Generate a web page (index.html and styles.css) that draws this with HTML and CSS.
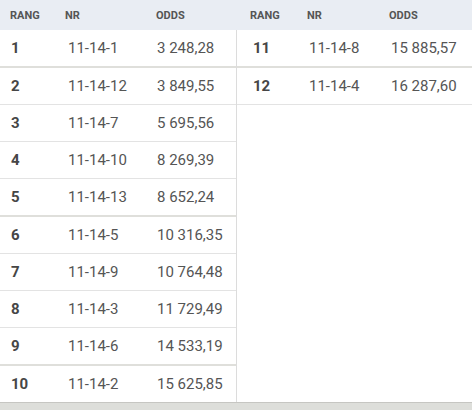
FILE: index.html
```html
<!DOCTYPE html>
<html lang="sv">
<head>
<meta charset="utf-8">
<title>Odds</title>
<link rel="stylesheet" href="styles.css">
</head>
<body>
<div class="board">
  <div class="panel panel-left">
    <div class="row head"><span>Rang</span><span>Nr</span><span>Odds</span></div>
    <div class="body">
      <div class="row thick"><b>1</b><span>11-14-1</span><span>3 248,28</span></div>
      <div class="row"><b>2</b><span>11-14-12</span><span>3 849,55</span></div>
      <div class="row"><b>3</b><span>11-14-7</span><span>5 695,56</span></div>
      <div class="row"><b>4</b><span>11-14-10</span><span>8 269,39</span></div>
      <div class="row thick"><b>5</b><span>11-14-13</span><span>8 652,24</span></div>
      <div class="row"><b>6</b><span>11-14-5</span><span>10 316,35</span></div>
      <div class="row"><b>7</b><span>11-14-9</span><span>10 764,48</span></div>
      <div class="row"><b>8</b><span>11-14-3</span><span>11 729,49</span></div>
      <div class="row thick"><b>9</b><span>11-14-6</span><span>14 533,19</span></div>
      <div class="row last"><b>10</b><span>11-14-2</span><span>15 625,85</span></div>
    </div>
  </div>
  <div class="panel panel-right">
    <div class="row head"><span>Rang</span><span>Nr</span><span>Odds</span></div>
    <div class="body">
      <div class="row thick"><b>11</b><span>11-14-8</span><span>15 885,57</span></div>
      <div class="row"><b>12</b><span>11-14-4</span><span>16 287,60</span></div>
    </div>
  </div>
</div>
<div class="footer"></div>
</body>
</html>
```
FILE: styles.css
```css
html, body {
  margin: 0;
  padding: 0;
  background: #ffffff;
}
body {
  font-family: Roboto, "Liberation Sans", sans-serif;
  color: #555555;
  width: 472px;
  height: 410px;
  overflow: hidden;
}
.board {
  display: flex;
  height: 402px;
}
.panel {
  display: flex;
  flex-direction: column;
}
.panel-left {
  width: 237px;
}
.panel-right {
  flex: 1;
}
.body {
  flex: 1;
}
.panel-left .body {
  border-right: 1px solid #dcdcdc;
}
.row {
  display: grid;
  align-items: center;
  height: 36px;
  border-bottom: 1px solid #e3e3e3;
  font-size: 15px;
  white-space: nowrap;
}
.row.thick {
  border-bottom: 2px solid #dfdfdb;
}
.row.last {
  border-bottom: none;
}
.panel-left .row {
  grid-template-columns: 58px 89px 1fr;
  padding-left: 10px;
}
.panel-right .row {
  grid-template-columns: 57px 82px 1fr;
  padding-left: 15px;
}
.row.head {
  height: 30px;
  border-bottom: none;
  background: #e9edf3;
  font-size: 11px;
  font-weight: 700;
  text-transform: uppercase;
  color: #555555;
}
.panel-left .row.head {
  grid-template-columns: 55px 91px 1fr;
  padding-left: 10px;
}
.panel-right .row.head {
  grid-template-columns: 57px 82px 1fr;
  padding-left: 13px;
}
.row b {
  font-weight: 700;
  color: #464646;
  padding-left: 1px;
}
.footer {
  height: 7px;
  border-top: 1px solid #c6c6c2;
  background: #dddeda;
}
```
